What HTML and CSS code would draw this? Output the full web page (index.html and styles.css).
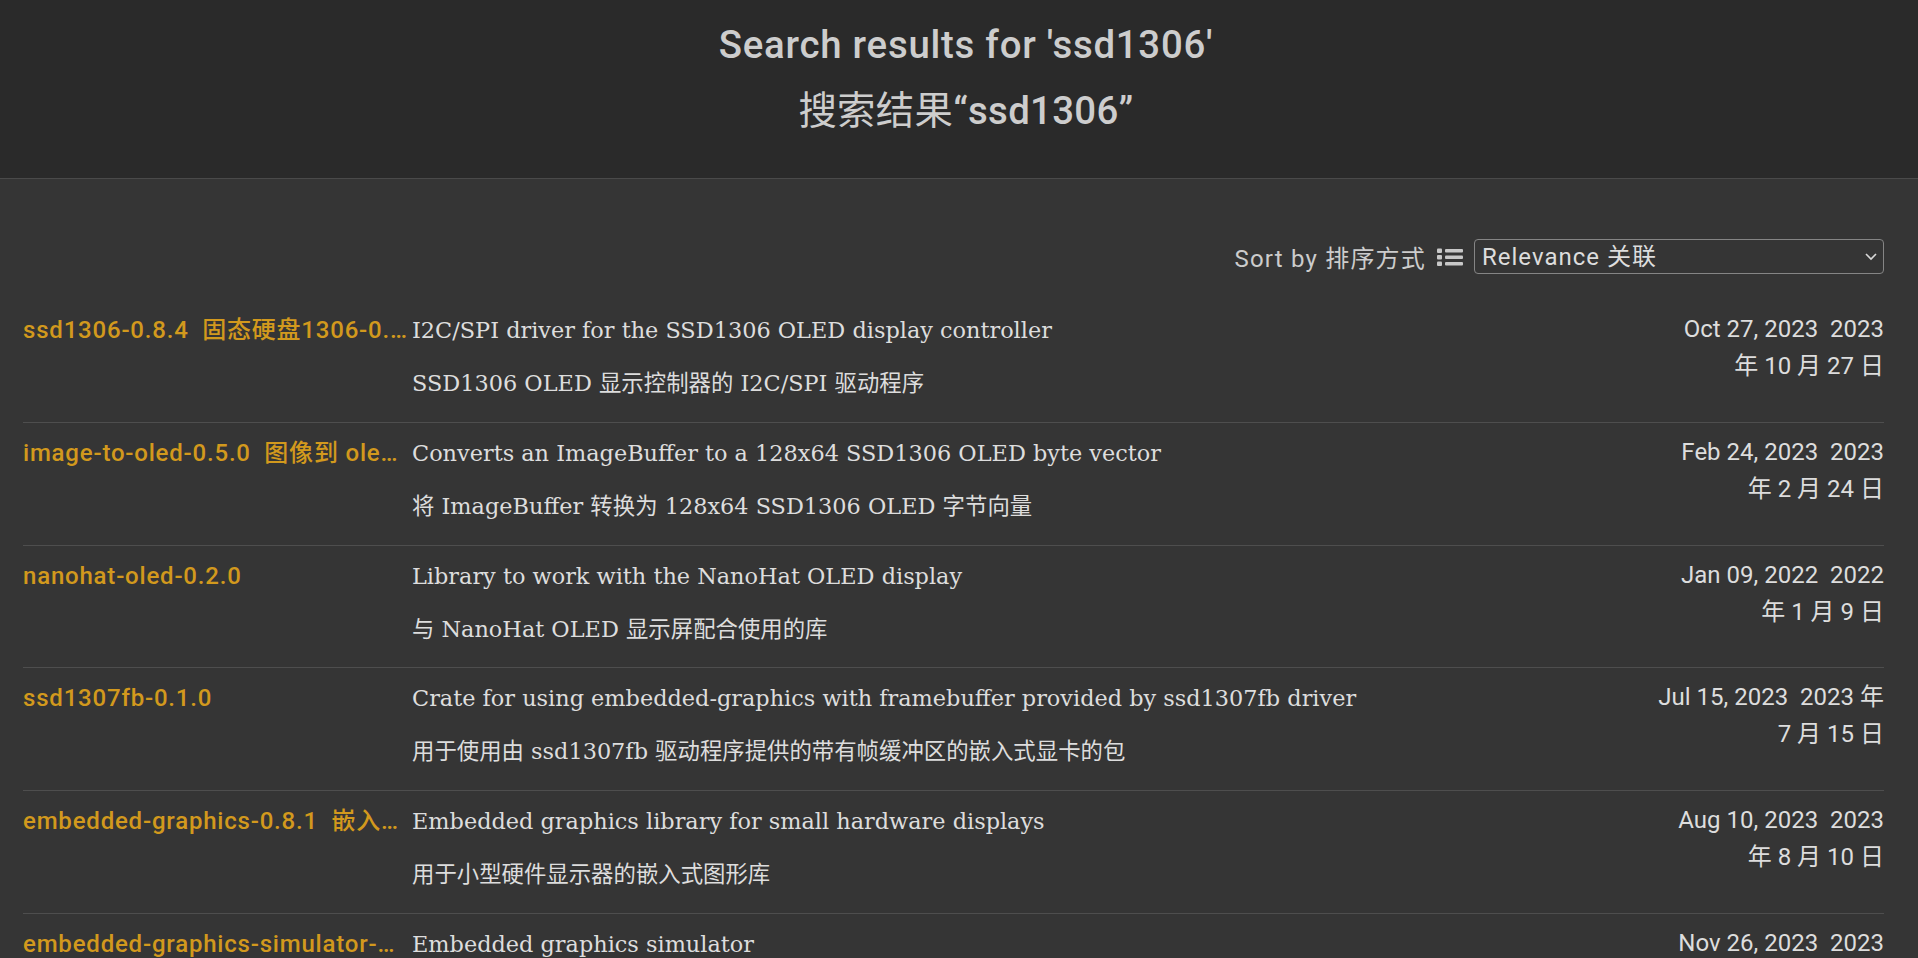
FILE: index.html
```html
<!DOCTYPE html>
<html lang="en">
<head>
<meta charset="utf-8">
<title>Search results for 'ssd1306'</title>
<link rel="stylesheet" href="styles.css">
</head>
<body>
<header class="hero">
  <h1 class="hero-title">Search results for 'ssd1306'<span class="tr"><span class="cjk">搜索结果</span>“ssd1306”</span></h1>
</header>
<main class="results">
  <div class="sort-bar">
    <span class="sort-label">Sort by 排序方式</span>
    <svg class="list-icon" width="26" height="20" viewBox="0 0 26 20" aria-hidden="true">
      <rect x="0" y="1.5" width="5" height="4.5" rx="1" fill="#c8c8c8"/>
      <rect x="0" y="8" width="5" height="4.5" rx="1" fill="#c8c8c8"/>
      <rect x="0" y="14.5" width="5" height="4.5" rx="1" fill="#c8c8c8"/>
      <rect x="8" y="2" width="18" height="3.5" rx="1" fill="#c8c8c8"/>
      <rect x="8" y="8.5" width="18" height="3.5" rx="1" fill="#c8c8c8"/>
      <rect x="8" y="15" width="18" height="3.5" rx="1" fill="#c8c8c8"/>
    </svg>
    <div class="select-wrap">
      <select class="select"><option>Relevance 关联</option></select>
      <svg class="chevron" width="12" height="8" viewBox="0 0 12 8" aria-hidden="true"><polyline points="1,1 6,6 11,1" fill="none" stroke="#d8d8d8" stroke-width="1.6"/></svg>
    </div>
  </div>
  <ul class="release-list">
    <li class="release">
      <div class="name">ssd1306-0.8.4  固态硬盘1306-0.8.4</div>
      <div class="desc"><p>I2C/SPI driver for the SSD1306 OLED display controller</p><p class="tr">SSD1306 OLED 显示控制器的 I2C/SPI 驱动程序</p></div>
      <div class="date"><span class="date-line">Oct 27, 2023  2023</span><span class="date-line tr">年 10 月 27 日</span></div>
    </li>
    <li class="release">
      <div class="name">image-to-oled-0.5.0  图像到 oled-0.5.0</div>
      <div class="desc"><p>Converts an ImageBuffer to a 128x64 SSD1306 OLED byte vector</p><p class="tr">将 ImageBuffer 转换为 128x64 SSD1306 OLED 字节向量</p></div>
      <div class="date"><span class="date-line">Feb 24, 2023  2023</span><span class="date-line tr">年 2 月 24 日</span></div>
    </li>
    <li class="release">
      <div class="name">nanohat-oled-0.2.0</div>
      <div class="desc"><p>Library to work with the NanoHat OLED display</p><p class="tr">与 NanoHat OLED 显示屏配合使用的库</p></div>
      <div class="date"><span class="date-line">Jan 09, 2022  2022</span><span class="date-line tr">年 1 月 9 日</span></div>
    </li>
    <li class="release">
      <div class="name">ssd1307fb-0.1.0</div>
      <div class="desc"><p>Crate for using embedded-graphics with framebuffer provided by ssd1307fb driver</p><p class="tr">用于使用由 ssd1307fb 驱动程序提供的带有帧缓冲区的嵌入式显卡的包</p></div>
      <div class="date"><span class="date-line">Jul 15, 2023  2023 年</span><span class="date-line tr">7 月 15 日</span></div>
    </li>
    <li class="release">
      <div class="name">embedded-graphics-0.8.1  嵌入式图形-0.8.1</div>
      <div class="desc"><p>Embedded graphics library for small hardware displays</p><p class="tr">用于小型硬件显示器的嵌入式图形库</p></div>
      <div class="date"><span class="date-line">Aug 10, 2023  2023</span><span class="date-line tr">年 8 月 10 日</span></div>
    </li>
    <li class="release">
      <div class="name">embedded-graphics-simulator-0.5.0  嵌入式图形模拟器-0.5.0</div>
      <div class="desc"><p>Embedded graphics simulator</p><p class="tr">嵌入式图形模拟器</p></div>
      <div class="date"><span class="date-line">Nov 26, 2023  2023</span><span class="date-line tr">年 11 月 26 日</span></div>
    </li>
  </ul>
</main>
</body>
</html>
```

FILE: styles.css
```css
* { box-sizing: border-box; }

html, body { margin: 0; }

body {
  background: #353535;
  color: #dddddd;
  font-family: Roboto, "Noto Sans CJK SC", sans-serif;
  font-size: 24px;
}

.hero {
  background: #2a2a2a;
  border-bottom: 1px solid #4a4a4a;
  height: 179px;
  padding: 22px 0 0 14px;
  text-align: center;
}

.hero-title {
  margin: 0;
  font-size: 38.4px;
  font-weight: 500;
  line-height: 46px;
  letter-spacing: 0.75px;
  color: #cdcdcd;
}

.hero-title .tr {
  display: block;
  margin-top: 20px;
  letter-spacing: 0.3px;
}

.hero-title .cjk { font-weight: 400; }

.results {
  padding: 0 34px 0 23px;
}

.sort-bar {
  display: flex;
  justify-content: flex-end;
  align-items: center;
  gap: 11px;
  margin-top: 60px;
  height: 35px;
}

.sort-label {
  color: #cccccc;
  letter-spacing: 1.2px;
}

.select-wrap {
  position: relative;
  width: 410px;
  height: 35px;
}

.select {
  appearance: none;
  -webkit-appearance: none;
  width: 100%;
  height: 100%;
  margin: 0;
  background: #353535;
  color: #dddddd;
  border: 1px solid #858585;
  border-radius: 4px;
  font: inherit;
  letter-spacing: 1px;
  padding: 0 0 0 7px;
}

.chevron {
  position: absolute;
  right: 7px;
  top: 14px;
  pointer-events: none;
}

.release-list {
  list-style: none;
  margin: 26px 0 0;
  padding: 0;
}

.release {
  display: flex;
  align-items: flex-start;
  border-bottom: 1px solid #4e4e4e;
  padding: 12px 0 20.8px;
}

.name {
  width: 389px;
  flex-shrink: 0;
  padding-right: 5px;
  color: #d2991d;
  font-weight: 500;
  letter-spacing: 0.8px;
  white-space: pre;
  overflow: hidden;
  text-overflow: ellipsis;
  line-height: 36px;
}

.desc {
  flex: 1;
  font-family: "DejaVu Serif", "Noto Sans CJK SC", serif;
  font-size: 22.4px;
  line-height: 36px;
}

.desc p { margin: 0; }

.desc .tr { margin-top: 17px; }

.date {
  width: 240px;
  flex-shrink: 0;
  text-align: right;
  white-space: pre;
  line-height: 34px;
}

.date-line { display: block; }

.date-line.tr { margin-top: 3px; }
```
